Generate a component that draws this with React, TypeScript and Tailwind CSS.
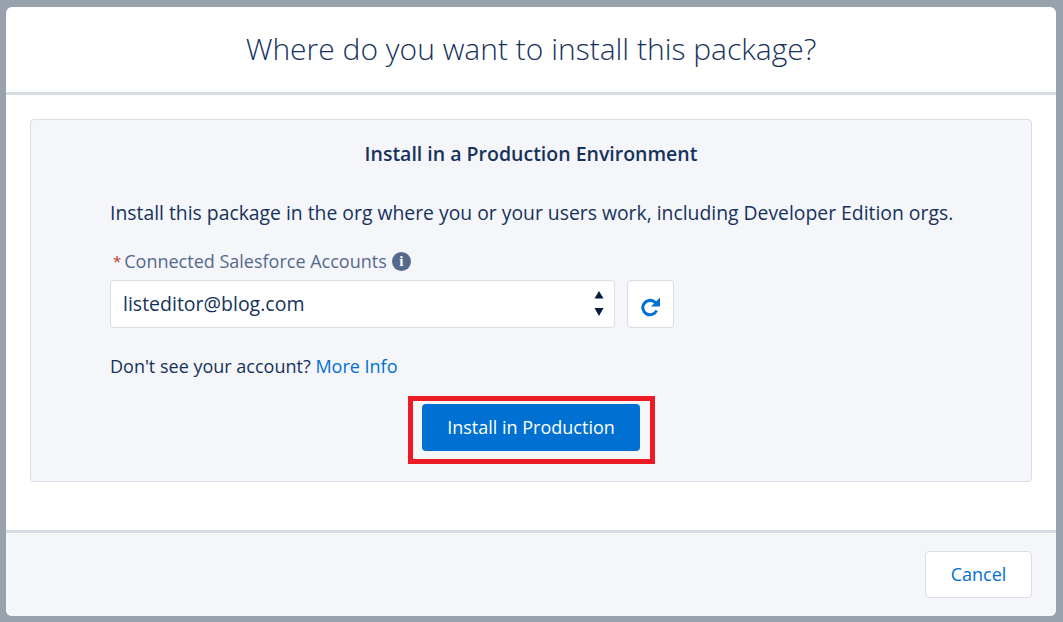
const font = "font-['Open_Sans',sans-serif]";

const App = () => {
  return (
    <div className={`h-[622px] w-[1063px] overflow-hidden bg-[#98a2ad] pt-[7px] pl-[6px] ${font}`}>
      <div className="flex h-[609px] w-[1050px] flex-col overflow-hidden rounded-md bg-white text-[#16325c]">
        <header className="flex h-[88px] shrink-0 items-center justify-center border-b-[3px] border-[#d8dde6] pb-px">
          <h1 className="text-[30px] font-light leading-none text-[#16325c]">Where do you want to install this package?</h1>
        </header>

        <main className="h-[435px] shrink-0 px-6 pt-6">
          <section className="h-[363px] rounded border border-[#d8dde6] bg-[#f4f6f9] pt-[22px]">
            <h2 className="text-center text-[19.5px] font-semibold leading-[24px]">Install in a Production Environment</h2>

            <div className="pl-[79px]">
              <p className="mt-[35px] text-[19.35px] leading-[24px]">
                Install this package in the org where you or your users work, including Developer Edition orgs.
              </p>

              <label className="mt-6 flex h-6 items-center pl-[3px] text-[18px] text-[#54698d]">
                <span className="mr-[3px] text-[15px] text-[#c23934]">*</span>
                Connected Salesforce Accounts
                <span className="ml-[5px] flex h-[19px] w-[19px] items-center justify-center rounded-full bg-[#54698d] font-['Liberation_Serif',serif] text-[15px] font-bold text-white">
                  i
                </span>
              </label>

              <div className="mt-[7px] flex gap-3">
                <div className="flex h-12 w-[505px] items-center justify-between rounded border border-[#d8dde6] bg-white pr-[10px] pl-3">
                  <span className="text-[19.5px]">listeditor@blog.com</span>
                  <svg width="10" height="26" viewBox="0 0 10 26" className="fill-[#061c3f]">
                    <path d="M5 0 L9.5 7.5 H0.5 Z" />
                    <path d="M0.5 17 H9.5 L5 25 Z" />
                  </svg>
                </div>
                <button className="flex h-12 w-[47px] items-center justify-center rounded border border-[#d8dde6] bg-white pt-[6px] text-[#0070d2]">
                  <svg width="20" height="20" viewBox="0 0 20 20" fill="none">
                    <path d="M15.6 13.5 A7.2 7.2 0 1 1 13.8 5.2 L16 7.4" stroke="currentColor" strokeWidth="3" />
                    <path d="M19 0.5 V9.5 H10 Z" fill="currentColor" />
                  </svg>
                </button>
              </div>

              <p className="mt-[26px] text-[18px] leading-[24px]">
                Don't see your account? <a className="text-[#0070d2]">More Info</a>
              </p>
            </div>

            <div className="mt-[26px] flex justify-center">
              <div className="relative">
                <button className="h-[47px] w-[218px] rounded bg-[#0070d2] text-[18px] text-white">Install in Production</button>
                <div className="absolute -top-2 -right-[15px] -bottom-[13px] -left-[14px] border-[5px] border-[#ed1c24]" />
              </div>
            </div>
          </section>
        </main>

        <footer className="flex flex-1 items-start justify-end border-t-[3px] border-[#d8dde6] bg-[#f4f6f9] pt-[18px] pr-6">
          <button className="h-[47px] w-[107px] rounded border border-[#d8dde6] bg-white text-[18px] text-[#0070d2]">Cancel</button>
        </footer>
      </div>
    </div>
  );
};

export default App;
